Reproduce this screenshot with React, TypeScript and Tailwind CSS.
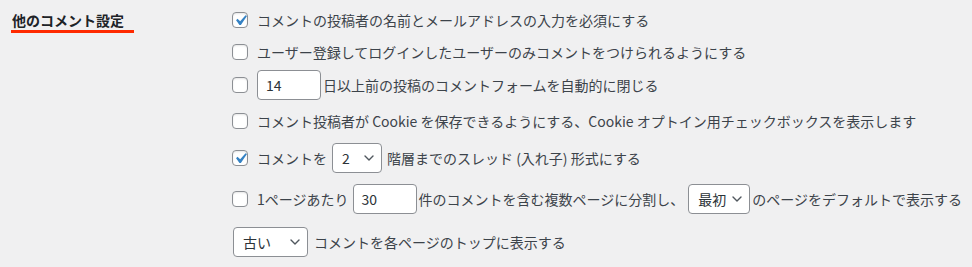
import React from "react";

function Check({ checked }: { checked?: boolean }) {
  return (
    <span className="relative flex h-4 w-4 shrink-0 items-center justify-center rounded-[4px] border border-[#8c8f94] bg-white shadow-[inset_0_1px_2px_rgba(0,0,0,0.1)]">
      {checked && (
        <svg viewBox="0 0 20 20" className="absolute -left-[3px] -top-[3px] h-[21px] w-[21px]">
          <path d="M14.83 4.89l1.34.94-5.81 8.38H9.02L5.78 9.67l1.34-1.25 2.57 2.4z" fill="#3582c4" />
        </svg>
      )}
    </span>
  );
}

function TextBox({ value, className }: { value: string; className?: string }) {
  return (
    <span
      className={
        "flex h-[30px] w-[64px] shrink-0 items-center rounded-[4px] border border-[#8c8f94] bg-white pl-[8px] text-[14px] text-[#2c3338] " +
        (className ?? "")
      }
    >
      {value}
    </span>
  );
}

function Chevron() {
  return (
    <svg width="10" height="6" viewBox="0 0 10 6" className="shrink-0">
      <path d="M1 1l4 4 4-4" fill="none" stroke="#50575e" strokeWidth="1.4" strokeLinecap="round" strokeLinejoin="round" />
    </svg>
  );
}

function Select({ value, width, className }: { value: string; width: string; className?: string }) {
  return (
    <span
      className={
        "flex h-[30px] shrink-0 items-center justify-between rounded-[4px] border border-[#8c8f94] bg-white pl-[9px] pr-[7px] text-[14px] text-[#2c3338] " +
        width +
        " " +
        (className ?? "")
      }
    >
      <span>{value}</span>
      <Chevron />
    </span>
  );
}

export default function App() {
  return (
    <div
      className="flex h-[267px] w-[972px] overflow-hidden bg-[#f0f0f1] text-[14px] text-[#3c434a]"
      style={{ fontFamily: '"Noto Sans CJK JP", "Noto Sans", sans-serif' }}
    >
      <div className="w-[232px] shrink-0 pl-[12px] pt-[10px]">
        <div className="text-[14px] font-semibold leading-[20px] text-[#1d2327]">他のコメント設定</div>
        <div className="-ml-[1px] mt-[0px] h-[3px] w-[123px] bg-[#ff2a00]" />
      </div>

      <div className="flex flex-col whitespace-nowrap leading-[20px]">
        <div className="mt-[5px] flex h-[30px] items-center">
          <Check checked />
          <span className="ml-[9px]">コメントの投稿者の名前とメールアドレスの入力を必須にする</span>
        </div>
        <div className="mt-[2px] flex h-[30px] items-center">
          <Check />
          <span className="ml-[9px]">ユーザー登録してログインしたユーザーのみコメントをつけられるようにする</span>
        </div>
        <div className="mt-[3px] flex h-[30px] items-center">
          <Check />
          <TextBox value="14" className="ml-[9px]" />
          <span className="ml-[2px]">日以上前の投稿のコメントフォームを自動的に閉じる</span>
        </div>
        <div className="mt-[6px] flex h-[30px] items-center">
          <Check />
          <span className="ml-[9px]">
            コメント投稿者が Cookie を保存できるようにする、Cookie オプトイン用チェックボックスを表示します
          </span>
        </div>
        <div className="mt-[7px] flex h-[30px] items-center">
          <Check checked />
          <span className="ml-[9px]">コメントを</span>
          <Select value="2" width="w-[50px]" className="ml-[5px]" />
          <span className="ml-[5px]">階層までのスレッド (入れ子) 形式にする</span>
        </div>
        <div className="mt-[11px] flex h-[30px] items-center">
          <Check />
          <span className="ml-[9px]">1ページあたり</span>
          <TextBox value="30" className="ml-[4px]" />
          <span className="ml-[2px]">件のコメントを含む複数ページに分割し、</span>
          <Select value="最初" width="w-[62px]" className="ml-[4px]" />
          <span className="ml-[2px]">のページをデフォルトで表示する</span>
        </div>
        <div className="mt-[13px] flex h-[30px] items-center">
          <Select value="古い" width="w-[75px]" className="ml-[1px]" />
          <span className="ml-[6px]">コメントを各ページのトップに表示する</span>
        </div>
      </div>
    </div>
  );
}
